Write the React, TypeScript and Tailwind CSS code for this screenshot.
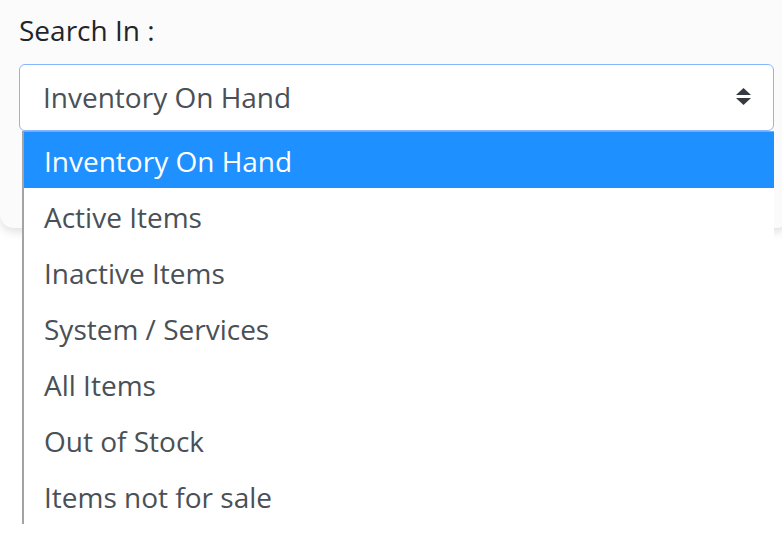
import React from 'react'

const options = [
    'Inventory On Hand',
    'Active Items',
    'Inactive Items',
    'System / Services',
    'All Items',
    'Out of Stock',
    'Items not for sale',
]

// 上下箭头图标
const SortIcon = () => (
    <svg width="15" height="17" viewBox="0 0 15 17" fill="#343a40">
        <path d="M7.5 0 L15 7 H0 Z" />
        <path d="M0 10 H15 L7.5 17 Z" />
    </svg>
)

export default function App() {
    const selected = 0

    return (
        <div className="relative min-h-[537px] w-full overflow-hidden bg-white font-['Open_Sans',sans-serif]">
            {/* 卡片 */}
            <div className="h-[228px] w-[790px] rounded-b-[14px] bg-[#fbfbfc] px-[19px] pt-[11px] shadow-[0_4px_10px_rgba(0,0,0,0.12)]">
                <label className="block text-[28px] leading-[38px] text-[#212529]">Search In :</label>

                <div className="relative mt-[15px] w-[755px]">
                    <div className="flex h-[67px] items-center justify-between rounded-[6px] border border-[#86b7fe] bg-white pb-[2px] pl-[23px] pr-[22px]">
                        <span className="text-[28px] text-[#495057]">{options[selected]}</span>
                        <SortIcon />
                    </div>

                    {/* 下拉列表 */}
                    <ul className="absolute left-[3px] top-[67px] z-10 w-[752px] border-l-2 border-t border-[#a3a3a3] bg-white">
                        {options.map((opt, i) => (
                            <li
                                key={opt}
                                className={
                                    i === selected
                                        ? 'flex h-[56px] items-center bg-[#1e90ff] pl-[20px] pt-[2px] text-[28px] text-white'
                                        : 'flex h-[56px] items-center pl-[20px] pt-[2px] text-[28px] text-[#495057]'
                                }
                            >
                                {opt}
                            </li>
                        ))}
                    </ul>
                </div>
            </div>
        </div>
    )
}
